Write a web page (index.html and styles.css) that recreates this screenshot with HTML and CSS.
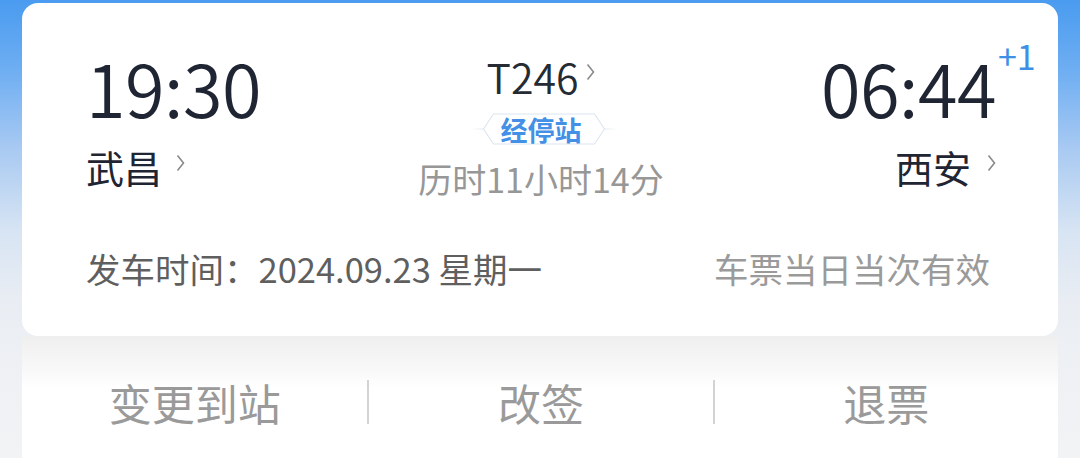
FILE: index.html
```html
<!DOCTYPE html>
<html lang="zh-CN">
<head>
<meta charset="utf-8">
<link rel="stylesheet" href="styles.css">
</head>
<body>
<div class="wrap">
  <div class="card">
    <div class="route">
      <div class="end dep">
        <div class="time">19:30</div>
        <div class="station">武昌<svg class="chev" width="9" height="18" viewBox="0 0 9 18"><polyline points="1.5,1.5 7.5,9 1.5,16.5" fill="none" stroke="#8a8a8a" stroke-width="1.6"/></svg></div>
      </div>
      <div class="mid">
        <div class="train">T246<svg class="chev tchev" width="9" height="18" viewBox="0 0 9 18"><polyline points="1.5,1.5 7.5,9 1.5,16.5" fill="none" stroke="#8a8a8a" stroke-width="1.6"/></svg></div>
        <div class="badge">
          <svg class="badge-bg" width="148" height="32" viewBox="0 0 148 32">
            <defs>
              <linearGradient id="ll" x1="0" x2="1" y1="0" y2="0">
                <stop offset="0" stop-color="#e3ebf4" stop-opacity="0"/>
                <stop offset="1" stop-color="#dbe5f0"/>
              </linearGradient>
              <linearGradient id="lr" x1="0" x2="1" y1="0" y2="0">
                <stop offset="0" stop-color="#dbe5f0"/>
                <stop offset="1" stop-color="#e3ebf4" stop-opacity="0"/>
              </linearGradient>
            </defs>
            <rect x="0" y="15.5" width="14" height="1" fill="url(#ll)"/>
            <rect x="134" y="15.5" width="14" height="1" fill="url(#lr)"/>
            <polygon points="13.5,16 23.5,1 124.5,1 134.5,16 124.5,31 23.5,31" fill="#fff" stroke="#dce6f1" stroke-width="1.2" stroke-linejoin="round"/>
          </svg>
          <span class="badge-text">经停站</span>
        </div>
        <div class="duration">历时11小时14分</div>
      </div>
      <div class="end arr">
        <div class="time">06:44<span class="plus">+1</span></div>
        <div class="station">西安<svg class="chev" width="9" height="18" viewBox="0 0 9 18"><polyline points="1.5,1.5 7.5,9 1.5,16.5" fill="none" stroke="#8a8a8a" stroke-width="1.6"/></svg></div>
      </div>
    </div>
    <div class="info">
      <div class="date">发车时间：2024.09.23 星期一</div>
      <div class="valid">车票当日当次有效</div>
    </div>
  </div>
  <div class="actions">
    <div class="act">变更到站</div>
    <div class="act">改签</div>
    <div class="act">退票</div>
  </div>
</div>
</body>
</html>
```
FILE: styles.css
```css
html, body {
  margin: 0;
  padding: 0;
}
body {
  width: 1080px;
  height: 458px;
  overflow: hidden;
  font-family: "Noto Sans CJK SC", "Noto Sans", sans-serif;
  background: linear-gradient(180deg, #4a9bf0 0px, #6eaef2 70px, #a9caf2 150px, #d7e4f3 230px, #e9edf3 300px, #eff1f4 380px, #f2f3f5 458px);
}
.wrap {
  padding: 3px 22px 0;
}
.card {
  background: #fff;
  border-radius: 16px;
  padding: 48px 62px 0 64px;
  height: 285px;
  position: relative;
  z-index: 1;
}
.route {
  display: flex;
  justify-content: space-between;
  align-items: flex-start;
}
.end {
  display: flex;
  flex-direction: column;
  width: 260px;
}
.arr {
  align-items: flex-end;
}
.time {
  font-size: 72px;
  line-height: 71px;
  font-weight: 350;
  color: #1f2533;
  position: relative;
  letter-spacing: -0.5px;
}
.plus {
  position: absolute;
  left: 100%;
  top: -12px;
  margin-left: 2px;
  font-size: 34px;
  line-height: 34px;
  font-weight: 400;
  color: #3e8fe6;
  letter-spacing: 0;
}
.station {
  margin-top: 26px;
  font-size: 38px;
  line-height: 38px;
  color: #1f2533;
  display: flex;
  align-items: center;
}
.chev {
  margin-left: 14px;
  position: relative;
  top: -4px;
}
.arr .chev {
  margin-left: 16px;
}
.mid {
  display: flex;
  flex-direction: column;
  align-items: center;
  padding-top: 5px;
}
.train {
  font-size: 41px;
  line-height: 41px;
  font-weight: 350;
  color: #252a33;
  display: flex;
  align-items: center;
}
.tchev {
  margin-left: 8px;
  top: -5px;
}
.badge {
  position: relative;
  width: 148px;
  height: 32px;
  margin-top: 16px;
  margin-left: 6px;
  display: flex;
  align-items: center;
  justify-content: center;
}
.badge-bg {
  position: absolute;
  left: 0;
  top: 0;
}
.badge-text {
  position: relative;
  font-size: 27px;
  line-height: 27px;
  font-weight: 700;
  color: #4390e6;
  margin-left: -6px;
}
.duration {
  margin-top: 17px;
  font-size: 34px;
  line-height: 34px;
  color: #979797;
}
.info {
  display: flex;
  justify-content: space-between;
  margin-top: 55px;
  font-size: 34.5px;
  line-height: 34px;
}
.date {
  color: #5f5f5f;
}
.valid {
  color: #9a9a9a;
  margin-right: 6px;
}
.actions {
  height: 140px;
  background: linear-gradient(180deg, #efefef 0px, #f9f9f9 36px, #ffffff 52px);
  display: grid;
  grid-template-columns: 1fr 1fr 1fr;
  align-items: start;
  padding-top: 44px;
  box-sizing: border-box;
}
.act {
  text-align: center;
  font-size: 43px;
  line-height: 44px;
  color: #9a9a9a;
  border-left: 2px solid #d3d3d3;
}
.act:first-child {
  border-left: none;
}
```
